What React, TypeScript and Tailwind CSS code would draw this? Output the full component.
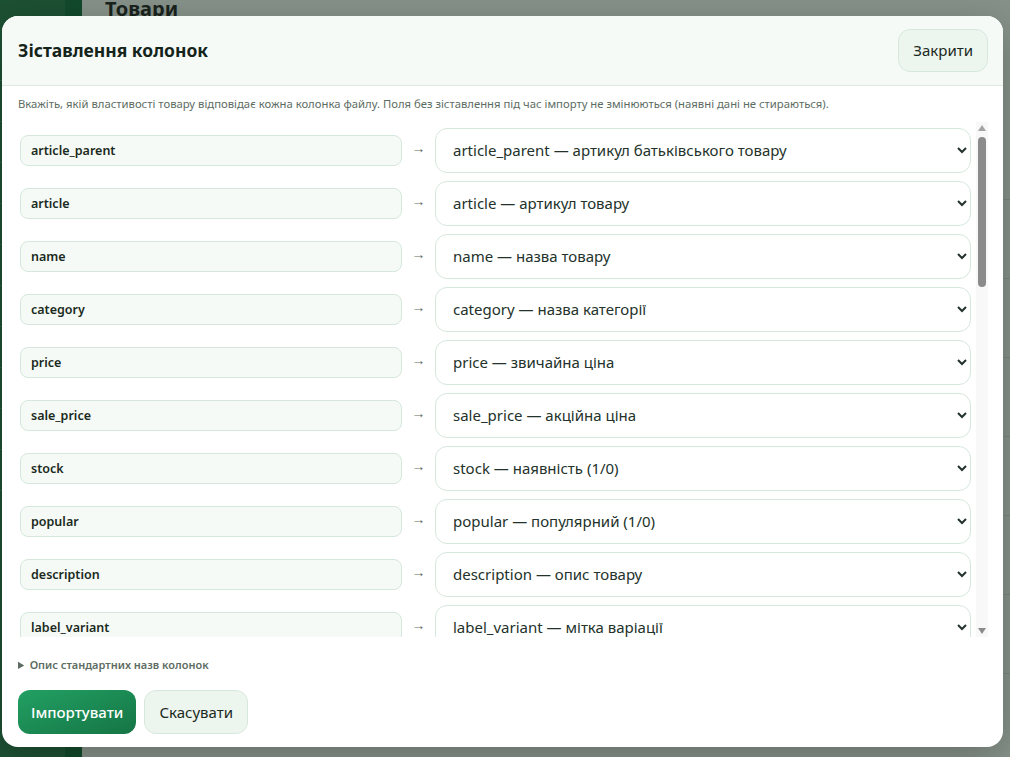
import { useState } from "react";

const fields = [
  { key: "article_parent", label: "article_parent — артикул батьківського товару" },
  { key: "article", label: "article — артикул товару" },
  { key: "name", label: "name — назва товару" },
  { key: "category", label: "category — назва категорії" },
  { key: "price", label: "price — звичайна ціна" },
  { key: "sale_price", label: "sale_price — акційна ціна" },
  { key: "stock", label: "stock — наявність (1/0)" },
  { key: "popular", label: "popular — популярний (1/0)" },
  { key: "description", label: "description — опис товару" },
  { key: "label_variant", label: "label_variant — мітка варіації" },
  { key: "value_variant", label: "value_variant — значення варіації" },
  { key: "image", label: "image — головне фото" },
  { key: "images", label: "images — додаткові фото" },
  { key: "brand", label: "brand — виробник" },
  { key: "unit", label: "unit — одиниця виміру" },
  { key: "weight", label: "weight — вага" },
  { key: "sort", label: "sort — порядок сортування" },
  { key: "seo_title", label: "seo_title — SEO заголовок" },
  { key: "seo_description", label: "seo_description — SEO опис" },
  { key: "seo_keywords", label: "seo_keywords — ключові слова" },
  { key: "url", label: "url — адреса сторінки" },
  { key: "old_price", label: "old_price — стара ціна" },
  { key: "quantity", label: "quantity — кількість на складі" },
  { key: "visible", label: "visible — показувати на сайті (1/0)" },
  { key: "new", label: "new — новинка (1/0)" },
  { key: "color", label: "color — колір" },
  { key: "size", label: "size — розмір" },
  { key: "material", label: "material — матеріал" },
  { key: "country", label: "country — країна виробництва" },
  { key: "warranty", label: "warranty — гарантія" },
];

const skip = "— не імпортувати —";

function MapRow({ field, label }: { field: string; label: string }) {
  const [value, setValue] = useState(label);
  return (
    <div className="flex items-center">
      <input
        readOnly
        value={field}
        className="ml-[2px] h-[31px] w-[382px] rounded-lg border border-[#d6e7dc] bg-[#f5faf6] px-[10px] text-[12.5px] font-semibold text-[#1b2a21] outline-none"
      />
      <span className="w-[33px] pb-[5px] text-center text-[14px] text-[#5f6e64]">→</span>
      <select
        value={value}
        onChange={e => setValue(e.target.value)}
        className="h-[45px] flex-1 rounded-xl border border-[#d6e7dc] bg-white pl-[13px] pr-2 text-[15px] text-[#23322a] outline-none"
      >
        <option>{label}</option>
        <option>{skip}</option>
      </select>
    </div>
  );
}

// classic scrollbar look, since the headless browser hides the real one
function FakeScrollbar() {
  return (
    <div className="flex w-[12px] flex-col items-center bg-[#f8f8f8] pt-[3px]">
      <svg width="8" height="6" viewBox="0 0 8 6"><path d="M4 0 L8 6 L0 6 Z" fill="#a3a3a3" /></svg>
      <div className="mt-[6px] h-[150px] w-[8px] rounded-full bg-[#8b8b8b]" />
      <div className="flex-1" />
      <svg width="8" height="6" viewBox="0 0 8 6" className="mb-[3px]"><path d="M0 0 L8 0 L4 6 Z" fill="#8b8b8b" /></svg>
    </div>
  );
}

export default function App() {
  return (
    <div className="relative h-[757px] w-[1010px] overflow-hidden bg-[#87938a] font-['Noto_Sans','Open_Sans',sans-serif]">
      {/* page behind the dialog */}
      <div className="flex h-full">
        <div className="flex h-full w-[82px]">
          <div className="h-full w-[65px] bg-[#1d5134]">
            {[80, 115, 230, 300, 345, 400, 460, 520, 590, 640, 700].map(y => (
              <div key={y} className="h-[1px] bg-[#2a6244]" style={{ marginTop: y === 80 ? 80 : 40 }} />
            ))}
          </div>
          <div className="h-full w-[17px] bg-[#124a2c]" />
        </div>
        <div className="flex-1 pl-[23px]">
          <div className="-mt-[6px] text-[20px] font-bold text-[#1a231d]">Товари</div>
          <div className="mt-[175px] space-y-[78px]">
            {[0, 1, 2, 3, 4, 5, 6].map(i => (
              <div key={i} className="h-[1px] bg-[#7a877e]" />
            ))}
          </div>
        </div>
      </div>

      {/* dialog */}
      <div className="absolute left-[2px] top-[16px] flex h-[731px] w-[1001px] flex-col overflow-hidden rounded-2xl bg-white shadow-[0_10px_40px_rgba(0,0,0,0.25)]">
        <div className="flex h-[70px] shrink-0 items-center justify-between border-b border-[#dbe9df] bg-[#f6faf7] pl-4 pr-[15px]">
          <h2 className="text-[17.5px] font-bold text-[#14241a]">Зіставлення колонок</h2>
          <button className="h-[43px] rounded-xl border border-[#d6e7dc] bg-[#edf5ef] px-[14px] text-[15px] text-[#1b2a21]">
            Закрити
          </button>
        </div>

        <p className="mt-[10px] px-4 text-[11.3px] text-[#5c6c62]">
          Вкажіть, якій властивості товару відповідає кожна колонка файлу. Поля без зіставлення під час імпорту не змінюються (наявні дані не стираються).
        </p>

        <div className="ml-4 mr-[15px] mt-[9px] flex h-[515px]">
          <div className="flex-1 space-y-[8px] overflow-y-auto pt-[6px] pr-[5px] [scrollbar-width:none]">
            {fields.map(f => (
              <MapRow key={f.key} field={f.key} label={f.label} />
            ))}
          </div>
          <FakeScrollbar />
        </div>

        <details className="mt-[20px] px-4 text-[11px] font-semibold text-[#5c6c62]">
          <summary className="cursor-pointer">Опис стандартних назв колонок</summary>
        </details>

        <div className="mt-[17px] flex gap-2 px-4">
          <button className="h-[44px] rounded-xl bg-gradient-to-br from-[#22a064] to-[#157544] px-[13px] text-[15px] font-medium text-white">
            Імпортувати
          </button>
          <button className="h-[44px] rounded-xl border border-[#d6e7dc] bg-[#edf5ef] px-[14px] text-[15px] text-[#1b2a21]">
            Скасувати
          </button>
        </div>
      </div>
    </div>
  );
}
